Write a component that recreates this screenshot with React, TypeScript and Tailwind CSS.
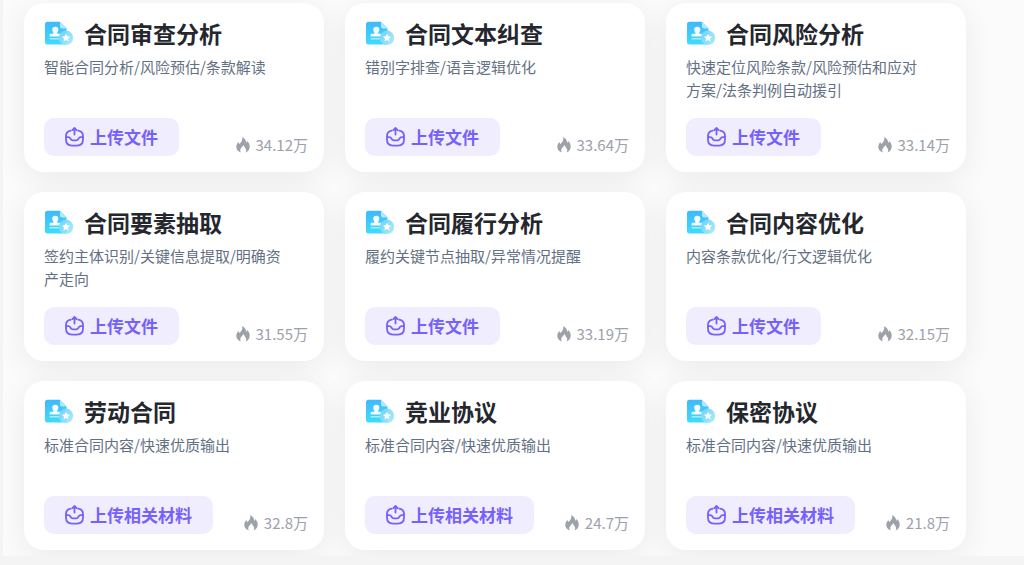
type Tool = {
  title: string;
  description: string;
  action: string;
  uses: string;
};

const tools: Tool[] = [
  { title: "合同审查分析", description: "智能合同分析/风险预估/条款解读", action: "上传文件", uses: "34.12万" },
  { title: "合同文本纠查", description: "错别字排查/语言逻辑优化", action: "上传文件", uses: "33.64万" },
  { title: "合同风险分析", description: "快速定位风险条款/风险预估和应对方案/法条判例自动援引", action: "上传文件", uses: "33.14万" },
  { title: "合同要素抽取", description: "签约主体识别/关键信息提取/明确资产走向", action: "上传文件", uses: "31.55万" },
  { title: "合同履行分析", description: "履约关键节点抽取/异常情况提醒", action: "上传文件", uses: "33.19万" },
  { title: "合同内容优化", description: "内容条款优化/行文逻辑优化", action: "上传文件", uses: "32.15万" },
  { title: "劳动合同", description: "标准合同内容/快速优质输出", action: "上传相关材料", uses: "32.8万" },
  { title: "竞业协议", description: "标准合同内容/快速优质输出", action: "上传相关材料", uses: "24.7万" },
  { title: "保密协议", description: "标准合同内容/快速优质输出", action: "上传相关材料", uses: "21.8万" },
];

function ContractIcon() {
  return (
    <svg className="h-6 w-[30px] shrink-0" viewBox="0 0 30 24" aria-hidden="true">
      <defs>
        <linearGradient id="sheet" x1="0" y1="0" x2="0" y2="1">
          <stop offset="0" stopColor="#3fb9fb" />
          <stop offset="1" stopColor="#3edcfb" />
        </linearGradient>
        <linearGradient id="seal" x1="0" y1="0" x2="1" y2="1">
          <stop offset="0" stopColor="#6fd3fa" />
          <stop offset="1" stopColor="#a8eafb" />
        </linearGradient>
      </defs>
      <path d="M3.500 .8H16l6.500 6.700v13.500a2.500 2.500 0 0 1-2.500 2.500H3.500A2.500 2.500 0 0 1 1 21V3.300A2.500 2.500 0 0 1 3.500 .8Z" fill="url(#sheet)" />
      <path d="M16 .8l6.500 6.700H18a2 2 0 0 1-2-2Z" fill="#b5e8fd" />
      <path d="M11.300 5.700a3.100 3.100 0 0 1 3.100 3.100c0 1.700-1.300 2.300-1.300 4h2.900a1 1 0 0 1 1 1v1.700H5.600v-1.700a1 1 0 0 1 1-1h2.900c0-1.700-1.300-2.300-1.300-4a3.100 3.100 0 0 1 3.100-3.100Z" fill="#f4fcff" />
      <path d="M5.600 17.800h10" stroke="#c5f3fe" strokeWidth="1.200" />
      <circle cx="22" cy="16.800" r="7.200" fill="url(#seal)" fillOpacity=".94" />
      <path d="m22 12.700 1.250 2.550 2.800.4-2.050 2 .5 2.800-2.500-1.350-2.500 1.350.5-2.800-2.050-2 2.800-.4Z" fill="#fff" />
    </svg>
  );
}

function UploadIcon() {
  return (
    <svg
      className="size-5 shrink-0"
      viewBox="0 0 20 20"
      fill="none"
      stroke="currentColor"
      strokeWidth="1.800"
      strokeLinecap="round"
      strokeLinejoin="round"
      aria-hidden="true"
    >
      <path d="M5.800 3.600C2.600 4.100 1 5.700 1 9v3.600c0 4.200 1.800 6 6 6h5c4.200 0 6-1.800 6-6V9c0-3.300-1.600-4.900-4.800-5.400" />
      <path d="M1.200 10.100h2.200c.8 0 1.500.4 1.900 1.200l.5.900c.4.800 1.100 1.200 1.900 1.200h3.600c.8 0 1.500-.4 1.900-1.200l.5-.9c.4-.8 1.100-1.200 1.900-1.200h2.200" />
      <path d="M9.500 7.500V1.400M7.400 3.100 9.500 1l2.100 2.100" />
    </svg>
  );
}

function FlameIcon() {
  return (
    <svg className="h-4 w-[14px] shrink-0" viewBox="0 0 14 16" fill="currentColor" aria-hidden="true">
      <path d="M6.300 0c2.500 1.500 3.900 3.400 4 5.900.5-.5.800-1.100.9-1.900 1.600 1.600 2.500 3.500 2.500 5.600 0 2.800-1.400 4.900-4.100 6 .6-1 .8-2 .5-3-.4-1.400-1.700-2.300-2.400-4.600-1.300 1.600-3 3-3.400 4.600-.2 1 0 2 .5 3C1.900 14.600.3 12.500.3 9.800c0-1.900.8-3.500 2.200-4.900.1.900.4 1.600 1 2.100C5.600 5.200 6.700 3.200 6.300 0Z" />
    </svg>
  );
}

function ToolCard({ title, description, action, uses }: Tool) {
  return (
    <article className="flex flex-col rounded-[20px] bg-white px-5 pt-3.5 pb-4 shadow-[0_6px_30px_rgba(0,0,0,0.07)]">
      <div className="flex items-center gap-2.5">
        <ContractIcon />
        <h2 className="text-[23px] leading-8 font-bold text-[#25272e]">{title}</h2>
      </div>
      <p className="mt-1.5 min-h-[46px] max-w-60 text-[15px] leading-[23px] text-[#637083]">
        {description}
      </p>
      <div className="mt-auto flex items-end justify-between pt-[17px]">
        <button
          type="button"
          className="flex h-[38px] items-center gap-[5px] rounded-[10px] bg-[#f0edfe] px-[21px] text-[17px] leading-6 font-bold text-[#7661fa]"
        >
          <UploadIcon />
          {action}
        </button>
        <span className="-mr-1 flex items-center gap-1.5 text-[15px] leading-[22px] text-[#9ca1aa]">
          <FlameIcon />
          {uses}
        </span>
      </div>
    </article>
  );
}

export default function App() {
  return (
    <div className="min-h-screen bg-[#f4f4f4] pl-[3px] font-['Noto_Sans_CJK_SC',sans-serif]">
      <main className="overflow-hidden bg-[#fbfbfb] pt-[3px] pr-[58px] pb-1.5 pl-[21px]">
        <div className="grid grid-cols-3 gap-x-[21px] gap-y-5">
          {tools.map((tool) => (
            <ToolCard key={tool.title} {...tool} />
          ))}
        </div>
      </main>
    </div>
  );
}
